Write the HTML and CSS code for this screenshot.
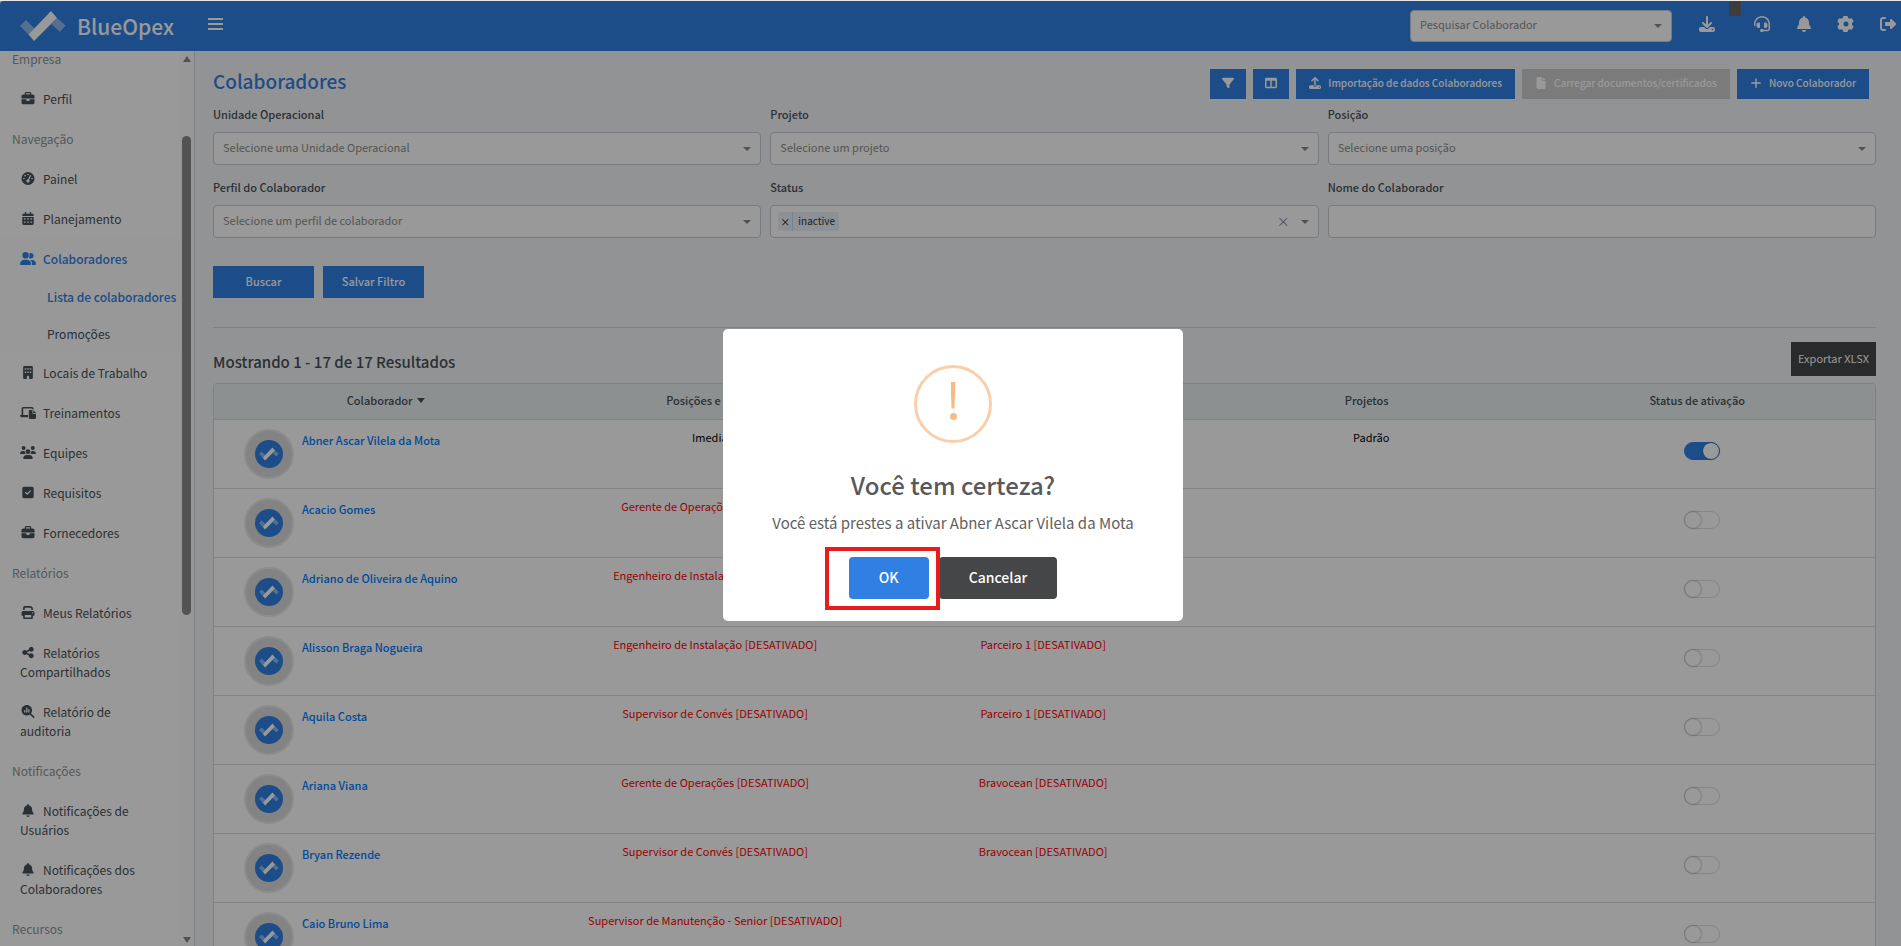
FILE: index.html
```html
<!DOCTYPE html>
<html lang="pt-BR">
<head>
  <meta charset="UTF-8">
  <title>Colaboradores</title>
  <link rel="stylesheet" href="styles.css">
</head>
<body>

  <!-- Icons -->
  <svg class="sprite" aria-hidden="true">
    <symbol id="i-mark" viewBox="0 0 46 30">
      <path d="M6 9L0 15l8.500 8.500 6-6zM37 7l8.500 7.500L40 21l-8.500-8z" opacity=".45"/>
      <path d="M31 0l6 7-23 23-5.500-6.500z"/>
    </symbol>
    <symbol id="i-briefcase" viewBox="0 0 512 512"><path d="M184 48h144c4 0 8 4 8 8v40H176V56c0-4 4-8 8-8zm-56 8v40H64c-35 0-64 29-64 64v96h512v-96c0-35-29-64-64-64h-64V56c0-31-25-56-56-56H184c-31 0-56 25-56 56zM512 288H320v32c0 18-14 32-32 32h-64c-18 0-32-14-32-32v-32H0v128c0 35 29 64 64 64h384c35 0 64-29 64-64V288z"/></symbol>
    <symbol id="i-gauge" viewBox="0 0 512 512"><path fill-rule="evenodd" d="M0 256a256 256 0 1 1 512 0A256 256 0 1 1 0 256zM288 96a32 32 0 1 0-64 0 32 32 0 1 0 64 0zM256 416c35 0 64-29 64-64 0-17-7-33-18-45l68-154c5-12 0-26-12-31s-26 0-31 12l-68 154c-38 1-67 30-67 64 0 35 29 64 64 64zM176 144a32 32 0 1 0-64 0 32 32 0 1 0 64 0zM96 288a32 32 0 1 0 0-64 32 32 0 1 0 0 64zm352-32a32 32 0 1 0-64 0 32 32 0 1 0 64 0z"/></symbol>
    <symbol id="i-calendar" viewBox="0 0 448 512"><path fill-rule="evenodd" d="M128 0c18 0 32 14 32 32v32h128V32c0-18 14-32 32-32s32 14 32 32v32h48c27 0 48 21 48 48v48H0v-48c0-27 21-48 48-48h48V32c0-18 14-32 32-32zM0 192h448v272c0 27-21 48-48 48H48c-27 0-48-21-48-48V192zm64 56v48h64v-48H64zm128 0v48h64v-48h-64zm128 0v48h64v-48h-64zM64 376v48h64v-48H64zm128 0v48h64v-48h-64zm128 0v48h64v-48h-64z"/></symbol>
    <symbol id="i-users" viewBox="0 0 640 512"><path d="M96 128a128 128 0 1 1 256 0A128 128 0 1 1 96 128zM0 482c0-98 80-178 178-178h92c98 0 178 80 178 178 0 17-13 30-30 30H30c-17 0-30-13-30-30zM609 512H471c6-9 9-20 9-32v-8c0-61-27-115-70-152h75c86 0 155 69 155 155 0 21-17 37-31 37zM432 256c-31 0-59-13-79-33 19-26 31-59 31-95 0-27-7-53-18-76 18-13 41-20 66-20 62 0 112 50 112 112s-50 112-112 112z"/></symbol>
    <symbol id="i-building" viewBox="0 0 384 512"><path fill-rule="evenodd" d="M48 0C21 0 0 21 0 48v416c0 27 21 48 48 48h96v-80c0-27 21-48 48-48s48 21 48 48v80h96c27 0 48-21 48-48V48c0-27-21-48-48-48H48zm16 88h56v56H64V88zm100 0h56v56h-56V88zm100 0h56v56h-56V88zM64 216h56v56H64v-56zm100 0h56v56h-56v-56zm100 0h56v56h-56v-56z"/></symbol>
    <symbol id="i-training" viewBox="0 0 640 512"><path d="M128 32C93 32 64 61 64 96v256H19c-11 0-19 8-19 19 0 42 34 77 77 77h243V352H128V96h352v32h64V96c0-35-29-64-64-64H128zm272 128c-27 0-48 21-48 48v256c0 27 21 48 48 48h192c27 0 48-21 48-48V304H528c-18 0-32-14-32-32V160h-96zm128 0v112h112L528 160z"/></symbol>
    <symbol id="i-team" viewBox="0 0 640 512"><path d="M144 0a80 80 0 1 1 0 160 80 80 0 1 1 0-160zm368 0a80 80 0 1 1 0 160 80 80 0 1 1 0-160zM0 299c0-59 48-107 107-107h43c16 0 31 4 44 10-1 7-2 14-2 22 0 38 17 72 43 96H21c-11 0-21-10-21-21zm405 21c26-24 43-58 43-96 0-8-1-15-2-22 13-6 28-10 44-10h43c59 0 107 48 107 107 0 11-10 21-21 21H405zM224 224a96 96 0 1 1 192 0 96 96 0 1 1-192 0zM128 485c0-74 60-133 133-133h118c73 0 133 60 133 133 0 15-12 27-27 27H155c-15 0-27-12-27-27z"/></symbol>
    <symbol id="i-check" viewBox="0 0 448 512"><path fill-rule="evenodd" d="M64 32C29 32 0 61 0 96v320c0 35 29 64 64 64h320c35 0 64-29 64-64V96c0-35-29-64-64-64H64zm273 177L209 337c-9 9-25 9-34 0l-64-64c-9-9-9-25 0-34s25-9 34 0l47 47 111-111c9-9 25-9 34 0s9 25 0 34z"/></symbol>
    <symbol id="i-print" viewBox="0 0 512 512"><path fill-rule="evenodd" d="M128 0C93 0 64 29 64 64v96h64V64h227l29 29v67h64V93c0-17-7-33-19-45l-28-29C389 7 372 0 355 0H128zM64 192c-35 0-64 29-64 64v96c0 18 14 32 32 32h32v64c0 35 29 64 64 64h256c35 0 64-29 64-64v-64h32c18 0 32-14 32-32v-96c0-35-29-64-64-64H64zm64 160h256v96H128v-96zm304-56a24 24 0 1 1 0-48 24 24 0 1 1 0 48z"/></symbol>
    <symbol id="i-share" viewBox="0 0 448 512"><path d="M352 224c53 0 96-43 96-96s-43-96-96-96-96 43-96 96c0 4 0 8 1 12l-94 47c-17-17-41-27-67-27-53 0-96 43-96 96s43 96 96 96c26 0 50-10 67-27l94 47c-1 4-1 8-1 12 0 53 43 96 96 96s96-43 96-96-43-96-96-96c-26 0-50 10-67 27l-94-47c1-8 1-16 0-24l94-47c17 17 41 27 67 27z"/></symbol>
    <symbol id="i-audit" viewBox="0 0 512 512"><path fill-rule="evenodd" d="M416 208c0 46-15 88-40 123l127 126c12 13 12 33 0 46s-33 12-46 0L331 376c-35 25-77 40-123 40C93 416 0 323 0 208S93 0 208 0s208 93 208 208zm-312 8v64c0 13 11 24 24 24s24-11 24-24v-64c0-13-11-24-24-24s-24 11-24 24zm80-96v160c0 13 11 24 24 24s24-11 24-24V120c0-13-11-24-24-24s-24 11-24 24zm80 64v96c0 13 11 24 24 24s24-11 24-24v-96c0-13-11-24-24-24s-24 11-24 24z"/></symbol>
    <symbol id="i-bell" viewBox="0 0 448 512"><path d="M224 0c-18 0-32 14-32 32v19C119 66 64 130 64 208v19c0 47-17 92-48 127l-8 9c-8 9-10 23-5 34s16 19 29 19h384c13 0 24-7 29-19s3-25-5-34l-8-9c-31-35-48-80-48-127v-19c0-78-55-142-128-157V32c0-18-14-32-32-32zm45 493c12-12 19-28 19-45H160c0 17 7 33 19 45s28 19 45 19 33-7 45-19z"/></symbol>
    <symbol id="i-download" viewBox="0 0 512 512"><path fill-rule="evenodd" d="M288 32c0-18-14-32-32-32s-32 14-32 32v243l-73-74c-13-12-33-12-46 0s-12 33 0 46l128 128c13 12 33 12 46 0l128-128c12-13 12-33 0-46s-33-12-46 0l-73 74V32zM64 352c-35 0-64 29-64 64v32c0 35 29 64 64 64h384c35 0 64-29 64-64v-32c0-35-29-64-64-64H347l-46 45c-25 25-65 25-90 0l-46-45H64zm368 56a24 24 0 1 1 0 48 24 24 0 1 1 0-48z"/></symbol>
    <symbol id="i-upload" viewBox="0 0 512 512"><path fill-rule="evenodd" d="M288 109v243c0 18-14 32-32 32s-32-14-32-32V109l-73 74c-13 12-33 12-46 0s-12-33 0-46L233 9c13-12 33-12 46 0l128 128c12 13 12 33 0 46s-33 12-46 0l-73-74zM64 352h128c0 35 29 64 64 64s64-29 64-64h128c35 0 64 29 64 64v32c0 35-29 64-64 64H64c-35 0-64-29-64-64v-32c0-35 29-64 64-64zm368 104a24 24 0 1 0 0-48 24 24 0 1 0 0 48z"/></symbol>
    <symbol id="i-headset" viewBox="0 0 512 512"><path d="M256 48C141 48 48 141 48 256v40c0 13-11 24-24 24S0 309 0 296v-40C0 115 115 0 256 0s256 115 256 256v144c0 49-39 88-88 88H314c-9 14-24 24-42 24h-32c-27 0-48-21-48-48s21-48 48-48h32c18 0 33 10 42 24h110c22 0 40-18 40-40V256c0-115-93-208-208-208zM144 208h16c18 0 32 14 32 32v112c0 18-14 32-32 32h-16c-35 0-64-29-64-64v-48c0-35 29-64 64-64zm224 0c35 0 64 29 64 64v48c0 35-29 64-64 64h-16c-18 0-32-14-32-32V240c0-18 14-32 32-32h16z"/></symbol>
    <symbol id="i-gear" viewBox="0 0 512 512"><path fill-rule="evenodd" d="M496 167c3 8 0 18-6 24l-43 39c2 17 2 35 0 52l43 39c6 6 9 16 6 24-12 34-29 62-51 88-6 7-15 9-24 7l-56-18c-13 10-28 19-44 26l-13 57c-2 9-9 15-17 16-33 6-69 6-102 0-8-1-15-7-17-16l-13-57c-16-7-31-16-44-26l-56 18c-9 2-18 0-24-7-22-26-39-54-51-88-3-8 0-18 6-24l43-39c-2-17-2-35 0-52l-43-39c-6-6-9-16-6-24 12-34 29-62 51-88 6-7 15-9 24-7l56 18c13-10 28-19 44-26l13-57c2-9 9-15 17-16 33-6 69-6 102 0 8 1 15 7 17 16l13 57c16 7 31 16 44 26l56-18c9-2 18 0 24 7 22 26 39 54 51 88zM256 336a80 80 0 1 0 0-160 80 80 0 1 0 0 160z"/></symbol>
    <symbol id="i-exit" viewBox="0 0 512 512"><path d="M378 105l121 121c8 8 13 19 13 30s-5 22-13 30L378 407c-6 6-15 9-23 9-19 0-35-16-35-35v-61H192c-18 0-32-14-32-32v-64c0-18 14-32 32-32h128v-61c0-19 16-35 35-35 8 0 17 3 23 9zM160 96H96c-18 0-32 14-32 32v256c0 18 14 32 32 32h64c18 0 32 14 32 32s-14 32-32 32H96c-53 0-96-43-96-96V128c0-53 43-96 96-96h64c18 0 32 14 32 32s-14 32-32 32z"/></symbol>
    <symbol id="i-filter" viewBox="0 0 512 512"><path d="M4 54C10 41 23 32 38 32h436c15 0 28 9 34 22s4 29-5 40L320 321v127c0 12-7 23-18 29s-23 4-33-3l-64-48c-8-6-13-16-13-26v-79L9 94C0 83-2 67 4 54z"/></symbol>
    <symbol id="i-columns" viewBox="0 0 512 512"><path fill-rule="evenodd" d="M0 96c0-35 29-64 64-64h384c35 0 64 29 64 64v320c0 35-29 64-64 64H64c-35 0-64-29-64-64V96zm64 64v256h160V160H64zm384 0H288v256h160V160z"/></symbol>
    <symbol id="i-file" viewBox="0 0 384 512"><path d="M0 64C0 29 29 0 64 0h160v128c0 18 14 32 32 32h128v288c0 35-29 64-64 64H64c-35 0-64-29-64-64V64zm384 64H256V0l128 128z"/></symbol>
    <symbol id="i-plus" viewBox="0 0 448 512"><path d="M256 80c0-18-14-32-32-32s-32 14-32 32v144H48c-18 0-32 14-32 32s14 32 32 32h144v144c0 18 14 32 32 32s32-14 32-32V288h144c18 0 32-14 32-32s-14-32-32-32H256V80z"/></symbol>
    <symbol id="i-bars" viewBox="0 0 15 12"><path d="M0 0h15v2H0zM0 5h15v2H0zM0 10h15v2H0z"/></symbol>
  </svg>

  <header class="topbar">
    <a class="brand" href="#"><svg class="brand-mark"><use href="#i-mark"/></svg>BlueOpex</a>
    <button class="menu-btn" aria-label="Menu"><svg><use href="#i-bars"/></svg></button>
    <select class="select search" aria-label="Pesquisar Colaborador"><option>Pesquisar Colaborador</option></select>
    <nav class="top-icons">
      <a href="#" aria-label="Baixar"><svg><use href="#i-download"/></svg></a>
      <span class="notch"></span>
      <a href="#" aria-label="Suporte"><svg><use href="#i-headset"/></svg></a>
      <a href="#" aria-label="Notificações"><svg><use href="#i-bell"/></svg></a>
      <a href="#" aria-label="Configurações"><svg><use href="#i-gear"/></svg></a>
      <a href="#" aria-label="Sair"><svg><use href="#i-exit"/></svg></a>
    </nav>
  </header>

  <div class="page">
    <aside class="sidebar">
      <nav class="side-nav">
        <h6>Empresa</h6>
        <a href="#"><svg><use href="#i-briefcase"/></svg>Perfil</a>
        <h6>Navegação</h6>
        <a href="#"><svg><use href="#i-gauge"/></svg>Painel</a>
        <a href="#"><svg><use href="#i-calendar"/></svg>Planejamento</a>
        <div class="open">
          <a href="#" class="active"><svg><use href="#i-users"/></svg>Colaboradores</a>
          <a href="#" class="sub active">Lista de colaboradores</a>
          <a href="#" class="sub">Promoções</a>
        </div>
        <a href="#"><svg><use href="#i-building"/></svg>Locais de Trabalho</a>
        <a href="#"><svg><use href="#i-training"/></svg>Treinamentos</a>
        <a href="#"><svg><use href="#i-team"/></svg>Equipes</a>
        <a href="#"><svg><use href="#i-check"/></svg>Requisitos</a>
        <a href="#"><svg><use href="#i-briefcase"/></svg>Fornecedores</a>
        <h6>Relatórios</h6>
        <a href="#"><svg><use href="#i-print"/></svg>Meus Relatórios</a>
        <a href="#"><svg><use href="#i-share"/></svg>Relatórios<br>Compartilhados</a>
        <a href="#"><svg><use href="#i-audit"/></svg>Relatório de<br>auditoria</a>
        <h6>Notificações</h6>
        <a href="#"><svg><use href="#i-bell"/></svg>Notificações de<br>Usuários</a>
        <a href="#"><svg><use href="#i-bell"/></svg>Notificações dos<br>Colaboradores</a>
        <h6>Recursos</h6>
      </nav>
      <div class="scrollbar">
        <span class="arrow up"></span>
        <span class="thumb"></span>
        <span class="arrow down"></span>
      </div>
    </aside>

    <main class="content">
      <div class="title-row">
        <h1>Colaboradores</h1>
        <div class="actions">
          <button class="btn icon-btn" aria-label="Filtros"><svg><use href="#i-filter"/></svg></button>
          <button class="btn icon-btn" aria-label="Colunas"><svg><use href="#i-columns"/></svg></button>
          <button class="btn"><svg><use href="#i-upload"/></svg>Importação de dados Colaboradores</button>
          <button class="btn" disabled><svg><use href="#i-file"/></svg>Carregar documentos/certificados</button>
          <button class="btn"><svg><use href="#i-plus"/></svg>Novo Colaborador</button>
        </div>
      </div>

      <form class="filters">
        <div class="field">
          <label for="unidade">Unidade Operacional</label>
          <select class="select" id="unidade"><option>Selecione uma Unidade Operacional</option></select>
        </div>
        <div class="field">
          <label for="projeto">Projeto</label>
          <select class="select" id="projeto"><option>Selecione um projeto</option></select>
        </div>
        <div class="field">
          <label for="posicao">Posição</label>
          <select class="select" id="posicao"><option>Selecione uma posição</option></select>
        </div>
        <div class="field">
          <label for="perfil">Perfil do Colaborador</label>
          <select class="select" id="perfil"><option>Selecione um perfil de colaborador</option></select>
        </div>
        <div class="field">
          <label for="status">Status</label>
          <div class="select multi">
            <span class="tag"><button type="button" aria-label="Remover">×</button><span>inactive</span></span>
            <input id="status" type="text">
            <button type="button" class="clear" aria-label="Limpar">×</button>
          </div>
        </div>
        <div class="field">
          <label for="nome">Nome do Colaborador</label>
          <input class="text" id="nome" type="text">
        </div>
      </form>

      <div class="filter-actions">
        <button class="btn">Buscar</button>
        <button class="btn">Salvar Filtro</button>
      </div>

      <div class="results-row">
        <h2>Mostrando 1 - 17 de 17 Resultados</h2>
        <button class="export">Exportar XLSX</button>
      </div>

      <div class="table-box">
        <table>
          <colgroup>
            <col class="c-name"><col class="c-pos"><col class="c-partner"><col class="c-proj"><col class="c-status">
          </colgroup>
          <thead>
            <tr>
              <th>Colaborador <span class="sort"></span></th>
              <th>Posições e Níveis</th>
              <th>Parceiros</th>
              <th>Projetos</th>
              <th>Status de ativação</th>
            </tr>
          </thead>
          <tbody>
            <tr>
              <td><div class="person"><span class="avatar"><svg><use href="#i-mark"/></svg></span><a href="#">Abner Ascar Vilela da Mota</a></div></td>
              <td>Imediato</td>
              <td></td>
              <td>Padrão</td>
              <td><input class="switch" type="checkbox" aria-label="Ativar Abner Ascar Vilela da Mota" checked></td>
            </tr>
            <tr>
              <td><div class="person"><span class="avatar"><svg><use href="#i-mark"/></svg></span><a href="#">Acacio Gomes</a></div></td>
              <td class="off">Gerente de Operações [DESATIVADO]</td>
              <td></td>
              <td></td>
              <td><input class="switch" type="checkbox" aria-label="Ativar Acacio Gomes"></td>
            </tr>
            <tr>
              <td><div class="person"><span class="avatar"><svg><use href="#i-mark"/></svg></span><a href="#">Adriano de Oliveira de Aquino</a></div></td>
              <td class="off">Engenheiro de Instalação [DESATIVADO]</td>
              <td></td>
              <td></td>
              <td><input class="switch" type="checkbox" aria-label="Ativar Adriano de Oliveira de Aquino"></td>
            </tr>
            <tr>
              <td><div class="person"><span class="avatar"><svg><use href="#i-mark"/></svg></span><a href="#">Alisson Braga Nogueira</a></div></td>
              <td class="off">Engenheiro de Instalação [DESATIVADO]</td>
              <td class="off">Parceiro 1 [DESATIVADO]</td>
              <td></td>
              <td><input class="switch" type="checkbox" aria-label="Ativar Alisson Braga Nogueira"></td>
            </tr>
            <tr>
              <td><div class="person"><span class="avatar"><svg><use href="#i-mark"/></svg></span><a href="#">Aquila Costa</a></div></td>
              <td class="off">Supervisor de Convés [DESATIVADO]</td>
              <td class="off">Parceiro 1 [DESATIVADO]</td>
              <td></td>
              <td><input class="switch" type="checkbox" aria-label="Ativar Aquila Costa"></td>
            </tr>
            <tr>
              <td><div class="person"><span class="avatar"><svg><use href="#i-mark"/></svg></span><a href="#">Ariana Viana</a></div></td>
              <td class="off">Gerente de Operações [DESATIVADO]</td>
              <td class="off">Bravocean [DESATIVADO]</td>
              <td></td>
              <td><input class="switch" type="checkbox" aria-label="Ativar Ariana Viana"></td>
            </tr>
            <tr>
              <td><div class="person"><span class="avatar"><svg><use href="#i-mark"/></svg></span><a href="#">Bryan Rezende</a></div></td>
              <td class="off">Supervisor de Convés [DESATIVADO]</td>
              <td class="off">Bravocean [DESATIVADO]</td>
              <td></td>
              <td><input class="switch" type="checkbox" aria-label="Ativar Bryan Rezende"></td>
            </tr>
            <tr>
              <td><div class="person"><span class="avatar"><svg><use href="#i-mark"/></svg></span><a href="#">Caio Bruno Lima</a></div></td>
              <td class="off">Supervisor de Manutenção - Senior [DESATIVADO]</td>
              <td></td>
              <td></td>
              <td><input class="switch" type="checkbox" aria-label="Ativar Caio Bruno Lima"></td>
            </tr>
          </tbody>
        </table>
      </div>
    </main>
  </div>

  <!-- Confirm dialog -->
  <div class="overlay">
    <div class="modal" role="dialog" aria-labelledby="modal-title">
      <div class="warning"><span class="bar"></span><span class="dot"></span></div>
      <h3 id="modal-title">Você tem certeza?</h3>
      <p>Você está prestes a ativar Abner Ascar Vilela da Mota</p>
      <div class="modal-actions">
        <div class="highlight"><button class="ok">OK</button></div>
        <button class="cancel">Cancelar</button>
      </div>
    </div>
  </div>

</body>
</html>
```

FILE: styles.css
```css
* {
  box-sizing: border-box;
}

body {
  margin: 0;
  height: 100vh;
  overflow: hidden;
  display: flex;
  flex-direction: column;
  border-top: 1px solid #e4e6e8;
  font-family: "Noto Sans CJK JP", "Noto Sans", sans-serif;
  font-size: 11px;
  line-height: 18px;
  color: #495057;
  background: #f4f5f8;
}

button,
input,
select {
  font: inherit;
}

button {
  border: none;
  cursor: pointer;
}

a {
  text-decoration: none;
  color: inherit;
}

svg {
  fill: currentColor;
}

.sprite {
  display: none;
}

/* Top bar */
.topbar {
  flex: none;
  height: 50px;
  display: flex;
  align-items: center;
  padding-left: 20px;
  background: #3080e4;
  color: #fff;
  border-radius: 4px 0 0 0;
}

.brand {
  display: flex;
  align-items: center;
  gap: 11px;
  width: 188px;
  font-size: 21px;
  font-weight: 500;
}

.brand-mark {
  width: 46px;
  height: 30px;
}

.menu-btn {
  padding: 0 0 4px;
  background: none;
  color: #fff;
}

.menu-btn svg {
  display: block;
  width: 15px;
  height: 12px;
}

.select,
.text {
  display: block;
  width: 100%;
  height: 33px;
  padding: 0 9px 4px;
  border: 1px solid #c9ccd3;
  border-radius: 4px;
  background: #fff;
  color: #8e8e8e;
  outline: none;
}

.select {
  appearance: none;
  background: #fff url("data:image/svg+xml,%3Csvg xmlns='http://www.w3.org/2000/svg' width='8' height='4'%3E%3Cpath d='M0 0h8L4 4z' fill='%23888'/%3E%3C/svg%3E") no-repeat right 9px center;
}

.search {
  width: 262px;
  height: 32px;
  margin-left: auto;
}

.top-icons {
  display: flex;
  align-items: center;
  padding: 0 4px 5px 26px;
}

.top-icons svg {
  display: block;
  width: 18px;
  height: 16px;
}

.top-icons a {
  margin-right: 24px;
}

.top-icons a:last-child {
  margin-right: 0;
}

.notch {
  align-self: flex-start;
  width: 12px;
  height: 15px;
  margin: -15px 12px 0 -11px;
  border-radius: 0 0 2px 2px;
  background: #666;
}

/* Sidebar */
.page {
  flex: 1;
  min-height: 0;
  display: flex;
}

.sidebar {
  flex: none;
  width: 195px;
  display: flex;
  overflow: hidden;
  border-right: 1px solid #d5d7db;
  background: #fff;
}

.side-nav {
  flex: 1;
  min-width: 0;
  margin-top: -2px;
  font-size: 12px;
  line-height: 19px;
  white-space: nowrap;
}

.side-nav h6 {
  margin: 0;
  padding: 11px 12px 10px;
  font-size: 12px;
  font-weight: 400;
  color: #8b9297;
}

.side-nav h6:first-child {
  padding-top: 0;
}

.side-nav a {
  display: block;
  padding: 11px 0 10px 20px;
}

.side-nav svg {
  width: 16px;
  height: 13px;
  margin-right: 7px;
  vertical-align: -1px;
}

.side-nav .open {
  background: #fdfdfe;
}

.side-nav .sub {
  padding: 9px 0 9px 47px;
}

.side-nav .active {
  color: #3080e4;
  font-weight: 500;
}

.scrollbar {
  flex: none;
  width: 14px;
  display: flex;
  flex-direction: column;
  align-items: center;
  padding: 5px 1px 3px 0;
  background: #fcfcfc;
}

.arrow {
  border: 4px solid transparent;
}

.up {
  border-top: none;
  border-bottom: 6px solid #888;
}

.down {
  border-bottom: none;
  border-top: 6px solid #888;
  margin-top: auto;
}

.thumb {
  width: 9px;
  height: 54%;
  margin-top: 74px;
  border-radius: 5px;
  background: #8b8b8b;
}

/* Content */
.content {
  flex: 1;
  min-width: 0;
  padding: 18px 25px 0 18px;
}

.title-row {
  display: flex;
  justify-content: space-between;
  padding-right: 7px;
  height: 36px;
}

h1 {
  margin: 0;
  font-size: 19px;
  line-height: 24px;
  font-weight: 500;
  color: #3080e4;
}

.actions {
  display: flex;
  gap: 7px;
}

.btn {
  height: 30px;
  padding: 0 13px 2px;
  background: #3080e4;
  color: #fff;
  font-size: 10px;
  font-weight: 500;
}

.btn svg {
  width: 12px;
  height: 12px;
  margin-right: 7px;
  vertical-align: -2px;
}

.btn:disabled {
  background: #cecece;
}

.icon-btn {
  padding: 0 12px 2px;
}

.icon-btn svg {
  margin-right: 0;
}

.filters {
  display: grid;
  grid-template-columns: repeat(3, 1fr);
  column-gap: 9px;
  row-gap: 13px;
}

.field label {
  display: block;
  margin-bottom: 9px;
  font-weight: 500;
}

.multi {
  display: flex;
  align-items: center;
  padding: 0 28px 0 7px;
}

.multi input {
  flex: 1;
  min-width: 0;
  border: none;
  outline: none;
  background: none;
}

.tag {
  display: flex;
  height: 19px;
  border-radius: 2px;
  background: #ebf2fb;
  color: #333;
  font-size: 10px;
}

.tag button {
  padding: 0 2px;
  border-right: 1px solid #c2dbf5;
  background: none;
}

.tag > span {
  padding: 0 4px 0 5px;
}

.clear {
  padding: 0 0 2px;
  background: none;
  color: #888;
  font-size: 13px;
}

.filter-actions {
  display: flex;
  gap: 9px;
  padding: 28px 0 29px;
  border-bottom: 1px solid #d3d5da;
}

.filter-actions .btn {
  width: 101px;
  height: 32px;
  font-size: 11px;
}

.results-row {
  display: flex;
  justify-content: space-between;
  align-items: flex-end;
  padding: 14px 0 7px;
}

h2 {
  margin: 0;
  font-size: 15px;
  line-height: 28px;
  font-weight: 500;
}

.export {
  height: 34px;
  padding: 0 7px 2px;
  background: #454648;
  color: #fff;
}

.table-box {
  border: 1px solid #d3d5da;
  border-radius: 4px 4px 0 0;
  overflow: hidden;
  background: #fff;
}

table {
  width: 100%;
  border-collapse: collapse;
  table-layout: fixed;
  text-align: center;
}

.c-name { width: 20.7%; }
.c-pos { width: 18.4%; }
.c-partner { width: 21.1%; }
.c-proj { width: 18.4%; }
.c-status { width: 21.4%; }

th {
  height: 35px;
  padding: 0 0 2px;
  background: #e9f1f1;
  font-weight: 500;
}

.sort {
  display: inline-block;
  margin-left: 2px;
  border: 4px solid transparent;
  border-top: 5px solid #495057;
  border-bottom: none;
  vertical-align: 2px;
}

td {
  height: 69px;
  padding: 8px 0 0 9px;
  border-top: 1px solid #dcdcdc;
  vertical-align: top;
  color: #000;
  white-space: nowrap;
}

.person {
  display: flex;
  gap: 8px;
  padding: 1px 0 0 21px;
  text-align: left;
  font-weight: 500;
  color: #007bff;
}

.avatar {
  display: grid;
  place-items: center;
  width: 50px;
  height: 50px;
  border: 2px solid #e9e9e9;
  border-radius: 50%;
  background: #dadada;
}

.avatar svg {
  width: 28px;
  height: 28px;
  padding: 4px;
  border-radius: 50%;
  background: #3080e4;
  color: #fff;
}

.person a {
  padding-top: 2px;
}

td.off {
  color: #f00;
}

.switch {
  appearance: none;
  display: block;
  width: 36px;
  height: 18px;
  margin: 14px auto 0;
  border: 1px solid #dfdfdf;
  border-radius: 9px;
  background: #fff;
}

.switch::before {
  content: "";
  display: block;
  width: 16px;
  height: 16px;
  border-radius: 50%;
  background: #fff;
  box-shadow: 0 0 2px rgba(0, 0, 0, 0.5);
}

.switch:checked {
  border-color: #3080e4;
  background: #3080e4;
}

.switch:checked::before {
  margin-left: auto;
}

/* Dialog */
.overlay {
  position: fixed;
  inset: 1px 0 0 0;
  display: flex;
  align-items: center;
  justify-content: center;
  padding: 2px 0 0 5px;
  background: rgba(0, 0, 0, 0.4);
}

.modal {
  width: 460px;
  padding: 36px 20px 22px;
  border-radius: 5px;
  background: #fff;
  text-align: center;
}

.warning {
  display: flex;
  flex-direction: column;
  align-items: center;
  gap: 4px;
  width: 78px;
  height: 78px;
  margin: 0 auto;
  padding-top: 14px;
  border: 3px solid #f9cfa9;
  border-radius: 50%;
}

.bar {
  width: 5px;
  height: 27px;
  background: #f8bb86;
  clip-path: polygon(0 0, 100% 0, 80% 100%, 20% 100%);
}

.dot {
  width: 7px;
  height: 7px;
  border-radius: 50%;
  background: #f8bb86;
}

.modal h3 {
  margin: 25px 0 11px;
  font-size: 24px;
  line-height: 34px;
  font-weight: 500;
  color: #595959;
}

.modal p {
  margin: 0 0 24px;
  font-size: 15px;
  line-height: 20px;
  color: #616161;
}

.modal-actions {
  display: flex;
  justify-content: center;
  gap: 10px;
}

.modal-actions button {
  height: 42px;
  padding: 0 30px 2px;
  border-radius: 4px;
  color: #fff;
  font-size: 14px;
  font-weight: 500;
}

.ok {
  background: #3080e4;
}

.cancel {
  background: #454648;
}

.highlight {
  position: relative;
}

.highlight::after {
  content: "";
  position: absolute;
  inset: -10px -11px -11px -24px;
  border: 4px solid #e81c1c;
  pointer-events: none;
}
```
